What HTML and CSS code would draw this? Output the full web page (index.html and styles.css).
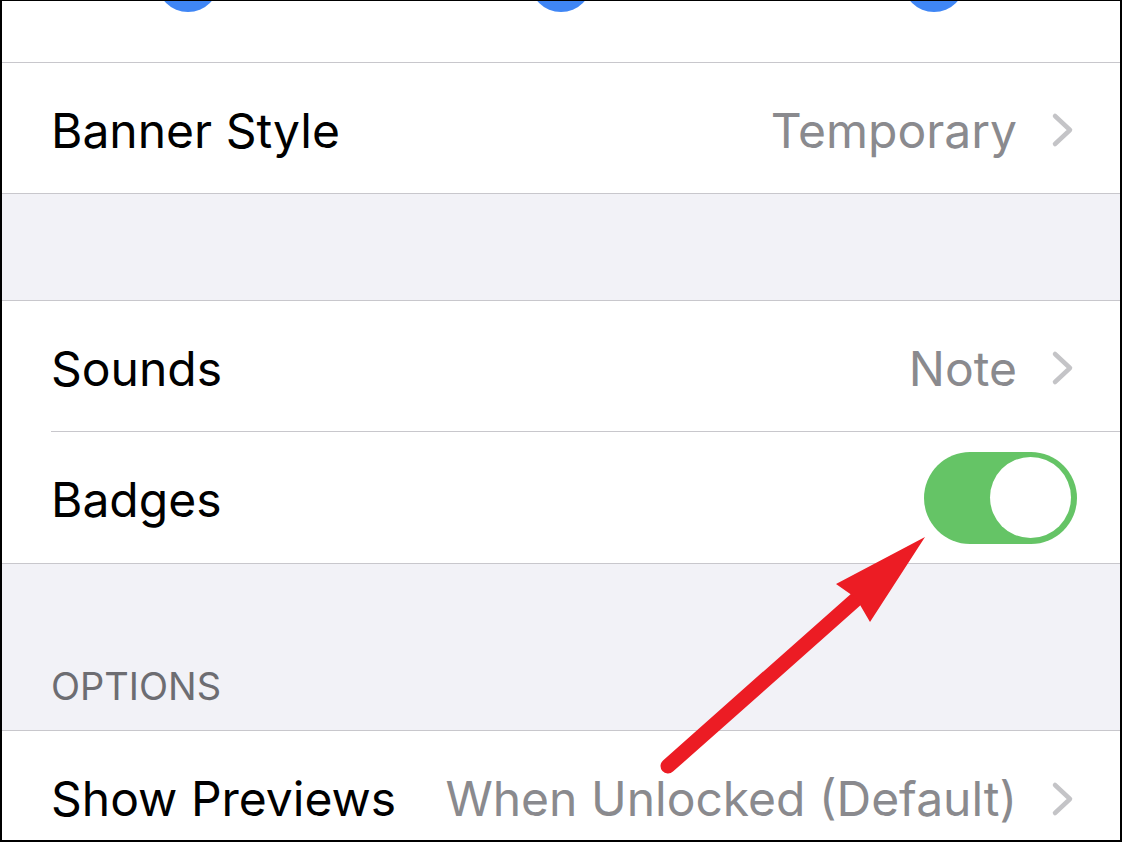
FILE: index.html
```html
<!DOCTYPE html>
<html lang="en">
<head>
    <meta charset="UTF-8">
    <meta name="viewport" content="width=device-width, initial-scale=1.0">
    <title>Notifications</title>
    <link rel="stylesheet" href="styles.css">
</head>
<body>
   <div class="screen">
       <div class="group group-first">
           <div class="cell">
               <div class="cell-inner icons">
                   <div class="icon-col"><span class="bubble"></span></div>
                   <div class="icon-col"><span class="bubble"></span></div>
                   <div class="icon-col"><span class="bubble"></span></div>
               </div>
           </div>
           <div class="cell">
               <div class="cell-inner">
                   <span class="cell-title">Banner Style</span>
                   <span class="cell-value">Temporary</span>
                   <svg class="chevron" viewBox="0 0 24 36"><path d="M4 4 L19 18 L4 32"/></svg>
               </div>
           </div>
       </div>

       <div class="spacer"></div>

       <div class="group">
           <div class="cell">
               <div class="cell-inner">
                   <span class="cell-title">Sounds</span>
                   <span class="cell-value">Note</span>
                   <svg class="chevron" viewBox="0 0 24 36"><path d="M4 4 L19 18 L4 32"/></svg>
               </div>
           </div>
           <div class="cell">
               <div class="cell-inner">
                   <span class="cell-title">Badges</span>
                   <div class="switch"><span class="switch-knob"></span></div>
               </div>
           </div>
       </div>

       <div class="section-header">OPTIONS</div>

       <div class="group">
           <div class="cell">
               <div class="cell-inner">
                   <span class="cell-title">Show Previews</span>
                   <span class="cell-value">When Unlocked (Default)</span>
                   <svg class="chevron" viewBox="0 0 24 36"><path d="M4 4 L19 18 L4 32"/></svg>
               </div>
           </div>
       </div>

       <svg class="arrow" viewBox="0 0 1122 842">
           <line x1="668" y1="766" x2="862" y2="594"/>
           <polygon points="925,537 836,584 856,598 870,622"/>
       </svg>
   </div>
</body>
</html>
```

FILE: styles.css
```css
* {
    box-sizing: border-box;
}
body {
    margin: 0;
    font-family: Inter, "Noto Sans", sans-serif;
}
.screen {
    position: relative;
    width: 1122px;
    height: 842px;
    overflow: hidden;
    background: #f2f2f7;
    border: 2px solid #000;
    border-top-width: 1px;
}
.group {
    background: #fff;
    border-top: 1px solid #c8c7cc;
    border-bottom: 1px solid #c8c7cc;
}
.group-first {
    border-top: none;
}
.group-first .cell-inner {
    height: 130px;
}
.cell {
    padding-left: 49px;
}
.cell-inner {
    height: 131px;
    display: flex;
    align-items: center;
    padding: 4px 45px 0 0;
    border-bottom: 1px solid #c8c7cc;
}
.cell:last-child .cell-inner {
    border-bottom: none;
}
.cell-title {
    font-size: 48px;
    color: #000;
    flex: 1;
}
.cell-value {
    font-size: 48px;
    color: #8a8a8e;
    margin-right: 34px;
}
.chevron {
    width: 24px;
    height: 36px;
    fill: none;
    stroke: #c4c4c7;
    stroke-width: 4.5;
    stroke-linecap: round;
    stroke-linejoin: round;
}

/* app icons peeking from above */
.group-first .icons {
    height: 62px;
    align-items: flex-start;
    padding: 0;
    margin-left: -49px;
}
.icon-col {
    flex: 1;
    display: flex;
    justify-content: center;
}
.bubble {
    width: 62px;
    height: 62px;
    margin-top: -51px;
    border-radius: 50%;
    background: #3f86f5;
}

.spacer {
    height: 106px;
}
.section-header {
    height: 166px;
    display: flex;
    align-items: flex-end;
    padding: 0 0 21px 49px;
    font-size: 38px;
    color: #6d6d72;
}

.switch {
    width: 153px;
    height: 92px;
    border-radius: 46px;
    background: #65c466;
    display: flex;
    align-items: center;
    justify-content: flex-end;
    padding-right: 6px;
    margin: -4px -2px 0 0;
}
.switch-knob {
    width: 81px;
    height: 81px;
    border-radius: 50%;
    background: #fff;
}

.arrow {
    position: absolute;
    left: -2px;
    top: -1px;
    width: 1122px;
    height: 842px;
}
.arrow line {
    stroke: #ec1c24;
    stroke-width: 15;
    stroke-linecap: round;
}
.arrow polygon {
    fill: #ec1c24;
}
```
